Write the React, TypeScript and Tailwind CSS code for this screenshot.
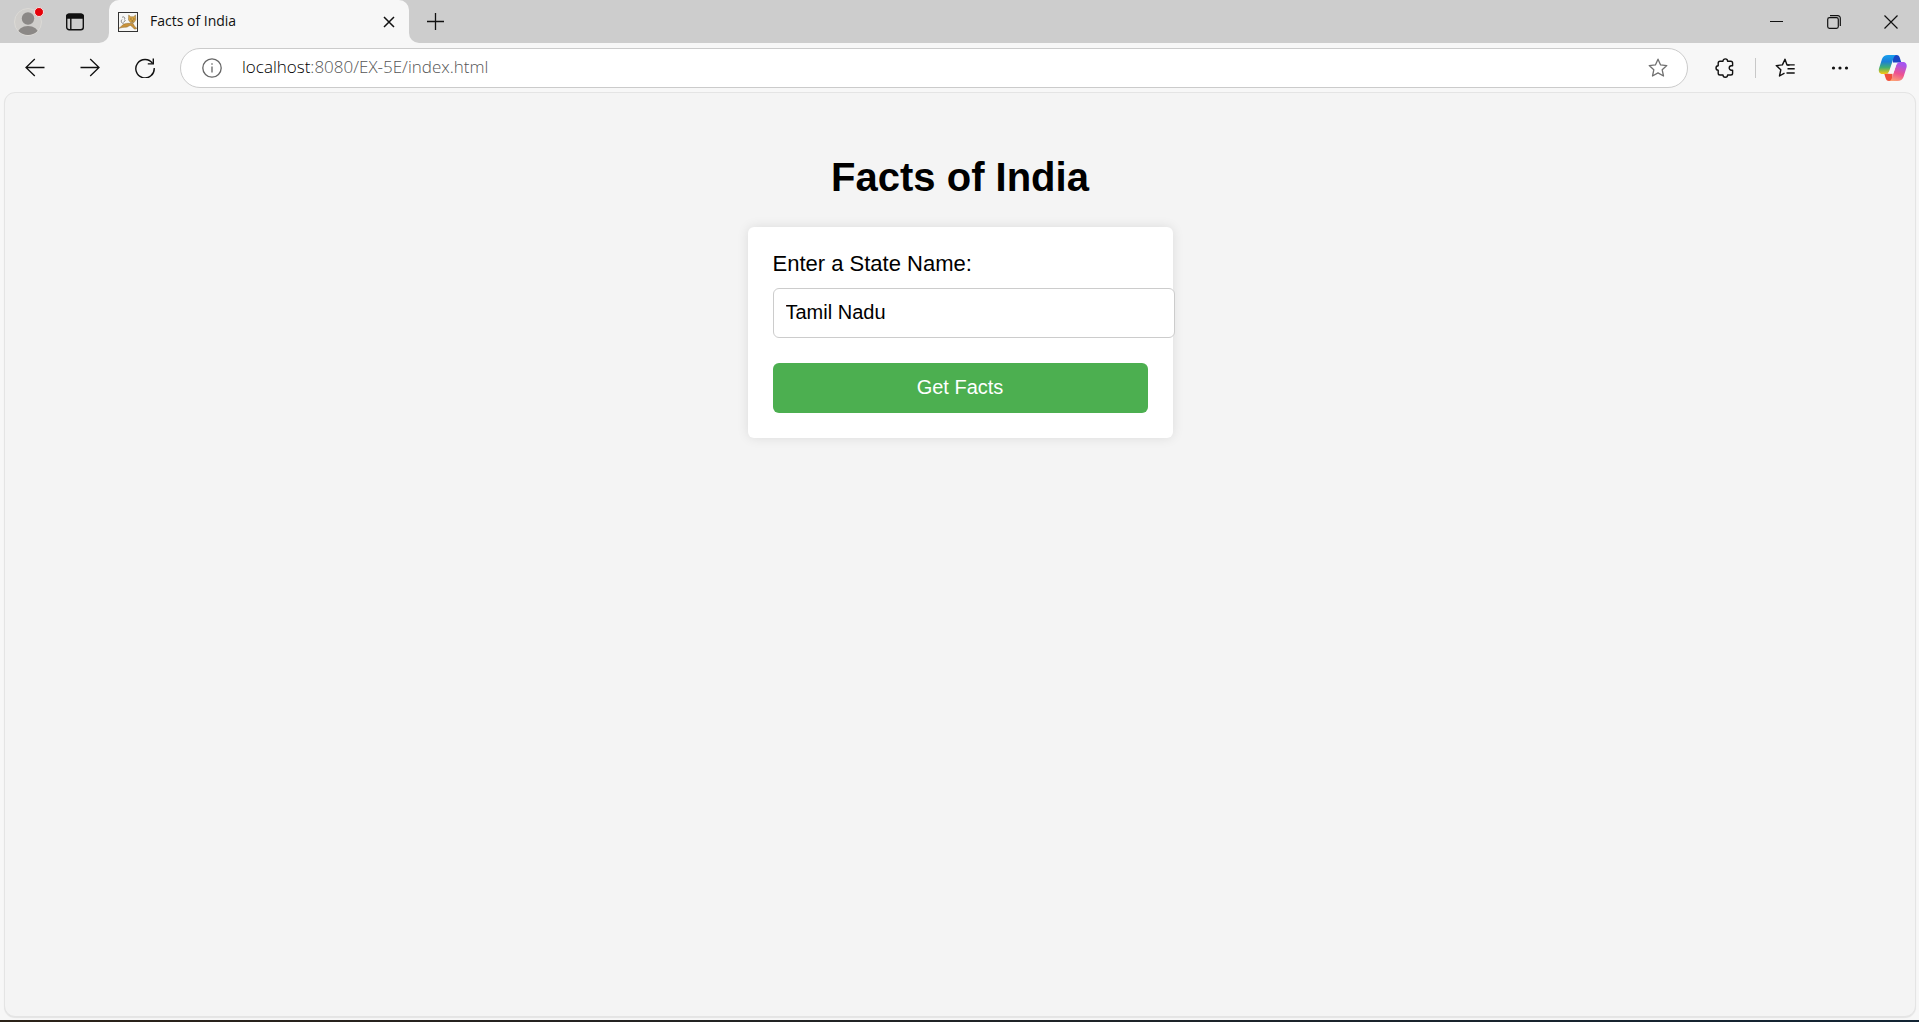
import { useState } from "react";
import type { ReactNode } from "react";

function IconButton({ label, className, children }: { label: string; className?: string; children: ReactNode }) {
  return (
    <button type="button" aria-label={label} className={"flex shrink-0 items-center justify-center " + (className ?? "")}>
      {children}
    </button>
  );
}

function ProfileIcon() {
  return (
    <svg width="32" height="32" viewBox="0 0 32 32">
      <defs>
        <clipPath id="face">
          <circle cx="14" cy="18" r="13" />
        </clipPath>
      </defs>
      <circle cx="14" cy="18" r="13.5" fill="#d0cecb" stroke="#dcdad6" />
      <g clipPath="url(#face)" fill="#8b8886">
        <circle cx="14" cy="14.500" r="6.200" />
        <ellipse cx="14" cy="30" rx="10.500" ry="8" />
      </g>
      <circle cx="25" cy="8" r="4.500" fill="#e60008" stroke="#f3e3e3" />
    </svg>
  );
}

function TabsIcon() {
  return (
    <svg width="20" height="20" viewBox="0 0 20 20" fill="none" stroke="#111" strokeWidth="1.400">
      <rect x="1.700" y="2.200" width="16.600" height="15.600" rx="2.500" />
      <path d="M1.700 6V4.500a2.300 2.300 0 0 1 2.300-2.300h12a2.300 2.300 0 0 1 2.300 2.300V6z" fill="#111" />
      <path d="M5.800 6v11.800" />
    </svg>
  );
}

function CatIcon() {
  return (
    <svg width="20" height="20" viewBox="0 0 20 20">
      <rect x="0.500" y="0.500" width="19" height="19" fill="#f7f7f5" stroke="#333" />
      <path d="M4 5.500c1.500-1.500 3.500 0 2.500 2M4 7.500c-1.500 1.500-.5 4 1.500 4M7.500 8L5.500 10.500" fill="none" stroke="#666" strokeWidth="0.800" />
      <path d="M1 16.300c2.500-1.800 4-5 9-5h5c1 2 2 4 3.800 5l-1.800.9c-2-.7-2.800-3-4.500-3.700-1.500 0-2.500 1.700-4.500 1.700-2.500 0-4.500.3-7 1.100z" fill="#c9923a" stroke="#7a5a24" strokeWidth="0.400" />
      <path d="M10.700 3l2 1.800h2.800L17.500 3l.3 4.800-1.800 2.700h-3.500l-2-2.500z" fill="#d9a646" stroke="#6b4c1c" strokeWidth="0.400" />
      <path d="M12.300 7h1.200M15.300 7h1.200M13.500 9h1.800" stroke="#4f3d1c" strokeWidth="0.700" />
    </svg>
  );
}

const STAR = "M10 1.200l2.600 5.700 6.200.7-4.600 4.200 1.300 6.200L10 14.900 4.500 18l1.300-6.200L1.200 7.600l6.200-.7z";

function CopilotIcon() {
  return (
    <svg width="30" height="30" viewBox="0 0 30 30">
      <defs>
        <linearGradient id="cl" x1="0" y1="0" x2="0" y2="1">
          <stop offset="0" stopColor="#17a0ee" />
          <stop offset="0.350" stopColor="#1b7fd8" />
          <stop offset="0.650" stopColor="#3fae74" />
          <stop offset="1" stopColor="#fcc80c" />
        </linearGradient>
        <linearGradient id="cr" x1="0.300" y1="0" x2="0" y2="1">
          <stop offset="0" stopColor="#a655ee" />
          <stop offset="0.500" stopColor="#ee5290" />
          <stop offset="1" stopColor="#ffb070" />
        </linearGradient>
      </defs>
      <path d="M15 2h3.500c2 0 2.800 1 3.400 3l1.400 4.500H15z" fill="#1b46c4" />
      <path d="M14.500 28H11c-2 0-2.800-1-3.400-3L6.200 20.500h8.300z" fill="#f0503c" />
      <path d="M10 2h9c-2 0-2.900 1.300-3.500 3.300L11.500 17.200c-.9 2.700-2.200 3.800-4.500 3.800H4.500C1.500 21 .2 18.500 1 15.500L4 6C5 3.200 7 2 10 2z" fill="url(#cl)" />
      <path d="M19.500 28h-9c2 0 2.900-1.300 3.500-3.300L18 12.800c.9-2.700 2.200-3.800 4.500-3.800H25c3 0 4.300 2.500 3.500 5.500L25.500 24c-1 2.800-3 4-6 4z" fill="url(#cr)" />
      <path d="M16.300 10h3c-.8.800-1.200 2-1.600 3.200l-2 6c-.3.900-.8 1.500-1.700 1.500h-4c1-.7 1.500-1.700 1.900-2.900l2.100-6.200c.4-1 1.200-1.600 2.300-1.600z" fill="#f7f7f7" />
    </svg>
  );
}

function TitleBar() {
  return (
    <header className="flex h-[43px] shrink-0 bg-[#f7f7f7]">
      <div className="flex w-[109px] shrink-0 items-center rounded-br-[10px] bg-[#cdcdcd] pl-[14px]">
        <IconButton label="Profile" className="pb-1">
          <ProfileIcon />
        </IconButton>
        <IconButton label="Tab actions" className="ml-[19px]">
          <TabsIcon />
        </IconButton>
      </div>
      <div className="flex w-[300px] shrink-0 bg-[#cdcdcd]">
        <div className="flex flex-1 items-center rounded-t-[10px] bg-[#f7f7f7] pl-[9px] pr-3">
          <CatIcon />
          <span className="ml-3 flex-1 pb-[2px] text-[14px] leading-5 text-[#111]">Facts of India</span>
          <IconButton label="Close tab" className="size-4">
            <svg width="12" height="12" viewBox="0 0 12 12" stroke="#111" strokeWidth="1.500">
              <path d="M1 1l10 10M11 1L1 11" />
            </svg>
          </IconButton>
        </div>
      </div>
      <div className="flex flex-1 items-center justify-between rounded-bl-[10px] bg-[#cdcdcd]">
        <IconButton label="New tab" className="ml-4 size-5 pb-px">
          <svg width="19" height="19" viewBox="0 0 19 19" stroke="#111" strokeWidth="1.300">
            <path d="M9.500 1v17M1 9.500h17" />
          </svg>
        </IconButton>
        <div className="flex h-full items-center">
          <IconButton label="Minimize" className="h-full w-[57px]">
            <svg width="13" height="13" viewBox="0 0 13 13" stroke="#111">
              <path d="M0 6.500h13" />
            </svg>
          </IconButton>
          <IconButton label="Restore" className="h-full w-[57px]">
            <svg width="14" height="14" viewBox="0 0 14 14" fill="none" stroke="#111" strokeWidth="1.200">
              <rect x="0.700" y="2.700" width="10.600" height="10.600" rx="1.800" />
              <path d="M3 0.700h7.800a2.500 2.500 0 0 1 2.500 2.500V11" />
            </svg>
          </IconButton>
          <IconButton label="Close" className="h-full w-[57px]">
            <svg width="14" height="14" viewBox="0 0 14 14" stroke="#111" strokeWidth="1.200">
              <path d="M0.500 0.500l13 13M13.500 0.500l-13 13" />
            </svg>
          </IconButton>
        </div>
      </div>
    </header>
  );
}

function Toolbar() {
  return (
    <nav className="flex h-[49px] shrink-0 items-center bg-[#f7f7f7] pr-[11px] text-[#111]">
      <IconButton label="Back" className="ml-[25px] size-5">
        <svg width="20" height="20" viewBox="0 0 20 20" fill="none" stroke="currentColor" strokeWidth="1.300">
          <path d="M19.500 9.500H1M9.800 1L1 9.500l8.800 8.500" />
        </svg>
      </IconButton>
      <IconButton label="Forward" className="ml-[35px] size-5">
        <svg width="20" height="20" viewBox="0 0 20 20" fill="none" stroke="currentColor" strokeWidth="1.300">
          <path d="M0.500 9.500H19M10.200 1L19 9.500l-8.800 8.500" />
        </svg>
      </IconButton>
      <IconButton label="Refresh" className="ml-[35px] size-5">
        <svg width="20" height="20" viewBox="0 0 20 20" fill="none" stroke="currentColor" strokeWidth="1.400">
          <path d="M17.600 5.500A9.200 9.200 0 1 0 19.200 10" />
          <path d="M18.300 0.500v5.400h-5.500" />
        </svg>
      </IconButton>
      <div className="ml-[25px] flex h-10 flex-1 items-center rounded-full border border-[#cbcbcb] bg-white pl-[21px] pr-[19px]">
        <svg width="20" height="20" viewBox="0 0 20 20" fill="none" stroke="#666" strokeWidth="1.300">
          <circle cx="10" cy="10" r="9.200" />
          <path d="M10 8.500v6M10 5.200v1.500" />
        </svg>
        <a href="#" className="ml-5 flex-1 pb-px text-[17px] leading-6 font-light text-[#555]">
          <span className="text-black">localhost</span>:8080/EX-5E/index.html
        </a>
        <IconButton label="Add to favorites" className="size-5">
          <svg width="20" height="20" viewBox="0 0 20 20" fill="none" stroke="#707070" strokeWidth="1.300" strokeLinejoin="round">
            <path d={STAR} />
          </svg>
        </IconButton>
      </div>
      <IconButton label="Extensions" className="ml-[27px] size-5">
        <svg width="20" height="20" viewBox="0 0 20 20" fill="none" stroke="currentColor" strokeWidth="1.400" strokeLinejoin="round">
          <path d="M5 3.200h3a2.300 2.300 0 0 1 4.600 0h3.200a1.800 1.800 0 0 1 1.800 1.800v2.800h-1.200a2.200 2.200 0 0 0 0 4.400h1.200v3a1.800 1.800 0 0 1-1.800 1.800h-3.200a2.300 2.300 0 0 1-4.600 0H5a1.800 1.800 0 0 1-1.800-1.800v-3a2.200 2.200 0 0 1 0-4.400V5A1.800 1.800 0 0 1 5 3.200z" />
        </svg>
      </IconButton>
      <div className="ml-5 h-5 w-px bg-[#c8c8c8]" />
      <IconButton label="Favorites" className="ml-[19px] size-5">
        <svg width="20" height="20" viewBox="0 0 20 20" fill="none" stroke="currentColor" strokeWidth="1.400" strokeLinejoin="round">
          <path d="M14.500 7.200l-2.500-.3L10 1.200 7.400 6.900l-6.200.7 4.600 4.200L4.500 18 9.500 15.200" />
          <path d="M12 6.900h7.700M12.500 10.800h7.200M11.500 15h8.200" />
        </svg>
      </IconButton>
      <IconButton label="Settings and more" className="ml-[35px] size-5">
        <svg width="20" height="20" viewBox="0 0 20 20" fill="currentColor">
          <circle cx="3.500" cy="10" r="1.600" />
          <circle cx="10" cy="10" r="1.600" />
          <circle cx="16.500" cy="10" r="1.600" />
        </svg>
      </IconButton>
      <IconButton label="Copilot" className="ml-7">
        <CopilotIcon />
      </IconButton>
    </nav>
  );
}

function FactsForm() {
  const [state, setState] = useState("Tamil Nadu");
  return (
    <form
      onSubmit={(e) => e.preventDefault()}
      className="mt-[27px] w-[425px] rounded-md bg-white p-[25px] shadow-[0_0_12px_rgba(0,0,0,0.1)]"
    >
      <label htmlFor="state" className="block text-[22px] leading-6">
        Enter a State Name:
      </label>
      <input
        id="state"
        type="text"
        value={state}
        onChange={(e) => setState(e.target.value)}
        className="mt-3 block h-[50px] w-[402px] rounded-md border border-[#ccc] bg-white px-3 pb-[2px] text-[20px] outline-none"
      />
      <button type="submit" className="mt-[25px] block h-[50px] w-full rounded-md bg-[#4caf50] pb-[2px] text-[20px] text-white">
        Get Facts
      </button>
    </form>
  );
}

export default function App() {
  return (
    <div className="flex h-screen flex-col overflow-hidden bg-[#f7f7f7] font-['Open_Sans','Noto_Sans',sans-serif]">
      <TitleBar />
      <Toolbar />
      <main className="mr-[3px] mb-[3px] ml-1 flex flex-1 flex-col items-center rounded-[11px] border border-[#e4e4e4] bg-[#f4f4f4] pt-[61px] font-['Liberation_Sans',Arial,sans-serif] text-black shadow-[0_1px_1px_rgba(0,0,0,0.08)]">
        <h1 className="text-[40px] leading-[46px] font-bold">Facts of India</h1>
        <FactsForm />
      </main>
      <div className="h-[2px] shrink-0 bg-linear-to-r from-[#2b2218] to-[#122433]" />
    </div>
  );
}
